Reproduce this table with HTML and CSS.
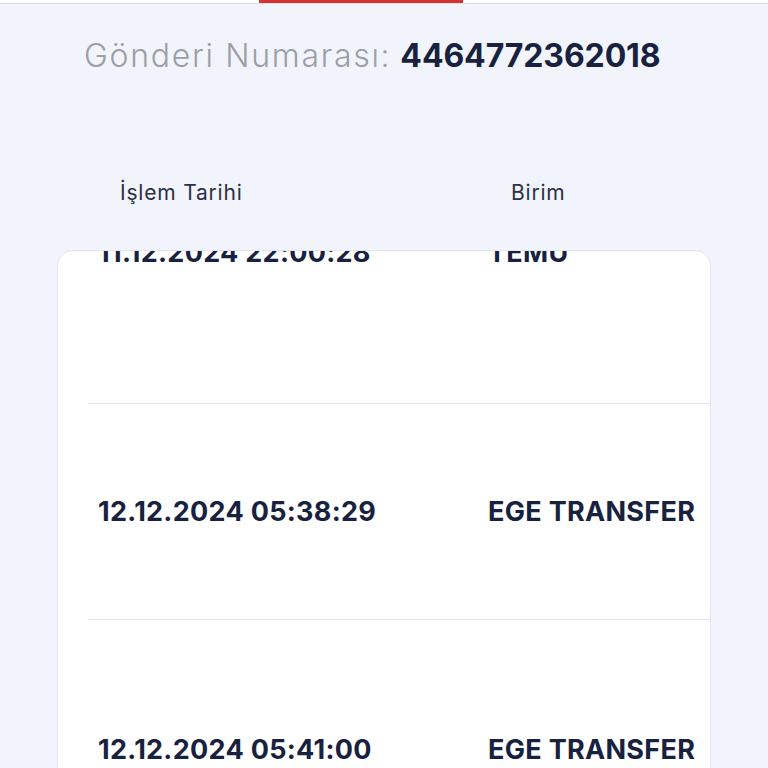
FILE: index.html
```html
<!DOCTYPE html>
<html lang="tr">
<head>
<meta charset="utf-8">
<link rel="stylesheet" href="styles.css">
</head>
<body>
<div class="topbar"><div class="tab"></div></div>
<h1 class="title"><span class="label">Gönderi Numarası:</span> <span class="number">4464772362018</span></h1>
<div class="heads">
  <div class="head">İşlem Tarihi</div>
  <div class="head">Birim</div>
</div>
<div class="card">
  <div class="list">
    <div class="row r1"><div class="cell">11.12.2024 22:00:28</div><div class="cell">TEMU</div></div>
    <div class="row r2"><div class="cell">12.12.2024 05:38:29</div><div class="cell">EGE TRANSFER</div></div>
    <div class="row r3"><div class="cell">12.12.2024 05:41:00</div><div class="cell">EGE TRANSFER</div></div>
  </div>
</div>
</body>
</html>
```
FILE: styles.css
```css
html, body {
  margin: 0;
  padding: 0;
  background: #f1f4fa;
  font-family: "Inter", "Noto Sans", sans-serif;
  overflow: hidden;
}
.topbar {
  height: 3px;
  background: #ffffff;
  border-bottom: 1px solid #dcdfe5;
  display: flex;
  padding-left: 259px;
}
.tab {
  width: 204px;
  height: 3px;
  background: #d6322e;
}
.title {
  margin: 0;
  padding: 30px 0 0 84px;
  font-size: 32px;
  line-height: 44px;
  font-weight: 400;
  white-space: nowrap;
}
.label {
  color: #9c9ea5;
  font-weight: 300;
  letter-spacing: 1.7px;
}
.number {
  color: #18223f;
  font-weight: 700;
  letter-spacing: -0.1px;
}
.heads {
  display: grid;
  grid-template-columns: 391px auto;
  margin: 99px 0 0 120px;
  height: 30px;
  align-items: center;
}
.head {
  font-size: 21px;
  letter-spacing: 0.8px;
  color: #2a3047;
}
.card {
  margin: 43px 0 0 57px;
  width: 652px;
  height: 600px;
  background: #ffffff;
  border: 1px solid #e3e6ec;
  border-radius: 16px;
  overflow: hidden;
}
.list {
  margin-top: -150px;
}
.row {
  display: grid;
  grid-template-columns: 390px auto;
  align-items: center;
  margin-left: 30px;
  padding-left: 10px;
  border-bottom: 1px solid #e2e5ea;
}
.r1 { height: 302px; }
.r2 { height: 215px; }
.r3 { height: 258px; }
.cell {
  font-size: 27px;
  font-weight: 700;
  letter-spacing: 0.3px;
  color: #18223f;
  white-space: nowrap;
}
```
